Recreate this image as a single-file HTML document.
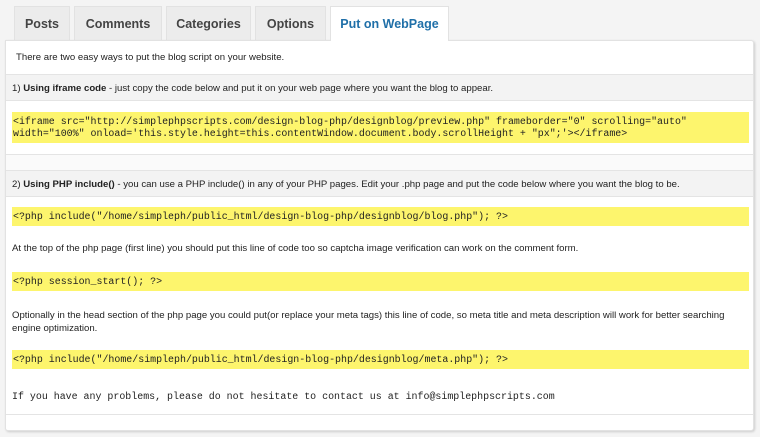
<!DOCTYPE html>
<html><head><style>
*{margin:0;padding:0;box-sizing:border-box}
body{width:760px;height:437px;background:#f4f4f4;font-family:"Liberation Sans",sans-serif;font-size:9.6px;color:#222;position:relative;overflow:hidden}
.tab{position:absolute;top:6px;height:34px;background:#ececec;border:1px solid #e2e2e2;border-bottom:none;font-weight:bold;font-size:12.5px;color:#444;text-align:center;line-height:34px}
.tab.a{background:#fff;color:#1f6fa8;height:35px;z-index:2}
.panel{position:absolute;left:5px;top:40px;width:749px;height:391px;background:#fff;border:1px solid #e2e2e2;border-radius:0 3px 3px 3px;box-shadow:1px 1px 2px #ccc}
.abs{position:absolute}
.hl{position:absolute;left:0;right:0;height:1px;background:#e4e4e4}
.gray{position:absolute;left:0;right:0;background:#f3f3f3;border-top:1px solid #e4e4e4;border-bottom:1px solid #e4e4e4}
.code{position:absolute;left:6px;width:737px;background:#fdf56d;font-family:"Liberation Mono",monospace;font-size:9.95px;color:#222;padding-left:1px}
.t{position:absolute;left:6px;white-space:nowrap}
</style></head><body>
<div class="tab" style="left:14px;width:56px">Posts</div>
<div class="tab" style="left:74px;width:88px">Comments</div>
<div class="tab" style="left:166px;width:85px">Categories</div>
<div class="tab" style="left:255px;width:71px">Options</div>
<div class="tab a" style="left:330px;width:119px">Put on WebPage</div>
<div class="panel">
<div class="t" style="left:10px;top:11px">There are two easy ways to put the blog script on your website.</div>
<div class="gray" style="top:33px;height:27px"><div class="t" style="top:8px">1) <b>Using iframe code</b> - just copy the code below and put it on your web page where you want the blog to appear.</div></div>
<div class="code" style="top:71px;height:31px;line-height:12px;padding-top:4px">&lt;iframe src="http://simplephpscripts.com/design-blog-php/designblog/preview.php" frameborder="0" scrolling="auto"<br>width="100%" onload='this.style.height=this.contentWindow.document.body.scrollHeight + "px";'&gt;&lt;/iframe&gt;</div>
<div class="hl" style="top:113px"></div>
<div class="abs" style="left:0;right:0;top:114px;height:15px;background:#fafafa"></div>
<div class="gray" style="top:129px;height:27px"><div class="t" style="top:8px">2) <b>Using PHP include()</b> - you can use a PHP include() in any of your PHP pages. Edit your .php page and put the code below where you want the blog to be.</div></div>
<div class="code" style="top:166px;height:19px;line-height:20px">&lt;?php include("/home/simpleph/public_html/design-blog-php/designblog/blog.php"); ?&gt;</div>
<div class="t" style="top:202px">At the top of the php page (first line) you should put this line of code too so captcha image verification can work on the comment form.</div>
<div class="code" style="top:231px;height:19px;line-height:20px">&lt;?php session_start(); ?&gt;</div>
<div class="t" style="top:268px;line-height:13px">Optionally in the head section of the php page you could put(or replace your meta tags) this line of code, so meta title and meta description will work for better searching<br>engine optimization.</div>
<div class="code" style="top:309px;height:19px;line-height:20px">&lt;?php include("/home/simpleph/public_html/design-blog-php/designblog/meta.php"); ?&gt;</div>
<div class="t" style="top:350px;font-family:'Liberation Mono',monospace;font-size:9.95px">If you have any problems, please do not hesitate to contact us at info@simplephpscripts.com</div>
<div class="hl" style="top:373px"></div>
</div>
</body></html>
